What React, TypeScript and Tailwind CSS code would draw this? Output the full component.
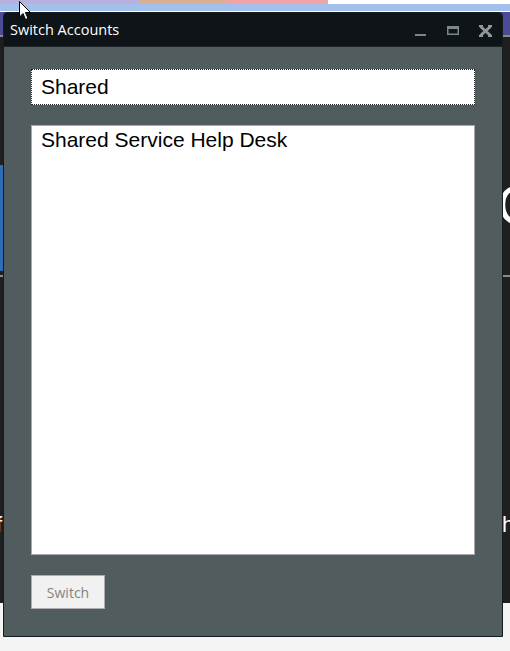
import React from "react";

export default function App() {
  return (
    <div className="relative w-[510px] h-[651px] overflow-hidden bg-[#f4f4f4]">
      {/* Desktop behind the window */}
      <div className="flex flex-col w-full">
        <div className="flex h-[4px]">
          <div className="w-[139px] bg-[#b9b1dd]" />
          <div className="w-[87px] bg-[#d7b195]" />
          <div className="w-[102px] bg-[#f2a3a6]" />
          <div className="flex-1 bg-white" />
        </div>
        <div className="h-[7px] bg-[#a2c0e9]" />
        <div className="h-[1px] bg-white" />
        <div className="h-[23px] bg-[#4b4b98]" />
        <div className="h-[2px] bg-[#8a8a8a]" />
        <div className="relative h-[238px] bg-[#1f1f1f]">
          <div className="absolute left-0 top-[128px] w-[4px] h-[106px] bg-[#2f6db8]" />
          <div className="absolute left-[497px] top-[140px] text-[56px] leading-none text-white font-['Liberation_Sans',sans-serif]">
            C
          </div>
        </div>
        <div className="h-[2px] bg-[#8a8a8a]" />
        <div className="relative h-[326px] bg-[#1f1f1f]">
          <div className="absolute left-[-4px] top-[237px] text-[22px] leading-none text-white font-['Liberation_Sans',sans-serif]">
            f
          </div>
          <div className="absolute left-[502px] top-[237px] text-[22px] leading-none text-white font-['Liberation_Sans',sans-serif]">
            h
          </div>
        </div>
      </div>

      {/* Dialog window */}
      <div className="absolute left-[3px] top-[12px] w-[500px] h-[625px] flex flex-col border border-[#161b1d] rounded-t-[4px] bg-[#515c5f] font-['Open_Sans','Noto_Sans',sans-serif]">
        <div className="h-[34px] flex items-center justify-between rounded-t-[3px] bg-[#0e1417] border-b border-[#1d2629] pl-[6px] pr-[10px]">
          <span className="text-[14.5px] text-white">Switch Accounts</span>
          <div className="flex items-center gap-[20px] pt-[2px]">
            <svg width="12" height="12" viewBox="0 0 12 12">
              <rect x="0" y="9" width="11" height="2" fill="#7d878b" />
            </svg>
            <svg width="12" height="12" viewBox="0 0 12 12">
              <rect x="0.75" y="1.75" width="10.5" height="7.5" fill="none" stroke="#7d878b" strokeWidth="1.5" />
              <rect x="0" y="1" width="12" height="3" fill="#7d878b" />
            </svg>
            <svg width="13" height="12" viewBox="0 0 13 12">
              <path d="M1.5 1.5 L11.5 10.5 M11.5 1.5 L1.5 10.5" stroke="#8e989c" strokeWidth="3" />
              <path d="M0 1 H4 M9 1 H13 M0 11 H4 M9 11 H13" stroke="#8e989c" strokeWidth="2" />
            </svg>
          </div>
        </div>

        <div className="flex-1 flex flex-col px-[27px] pt-[22px] pb-[27px] gap-[20px]">
          <div className="h-[36px] bg-white border border-dotted border-[#222] flex items-center px-[9px]">
            <span className="text-[21px] text-black font-['Liberation_Sans',Arial,sans-serif]">Shared</span>
          </div>
          <div className="flex-1 bg-white border border-[#a9a9a9] px-[9px] pt-[1px]">
            <div className="text-[21px] leading-[26px] text-black font-['Liberation_Sans',Arial,sans-serif]">
              Shared Service Help Desk
            </div>
          </div>
          <div>
            <button className="w-[74px] h-[34px] bg-[#f1f1f1] border border-[#adadad] text-[14px] text-[#838383]">
              Switch
            </button>
          </div>
        </div>
      </div>

      {/* Mouse pointer */}
      <svg className="absolute left-[19px] top-[1px]" width="13" height="20" viewBox="0 0 13 20">
        <path d="M0.5 0.5 V16 L4 12.5 L6.5 18.5 L9 17.5 L6.5 11.5 H11.5 Z" fill="#ffffff" stroke="#000000" strokeWidth="1" />
      </svg>
    </div>
  );
}
